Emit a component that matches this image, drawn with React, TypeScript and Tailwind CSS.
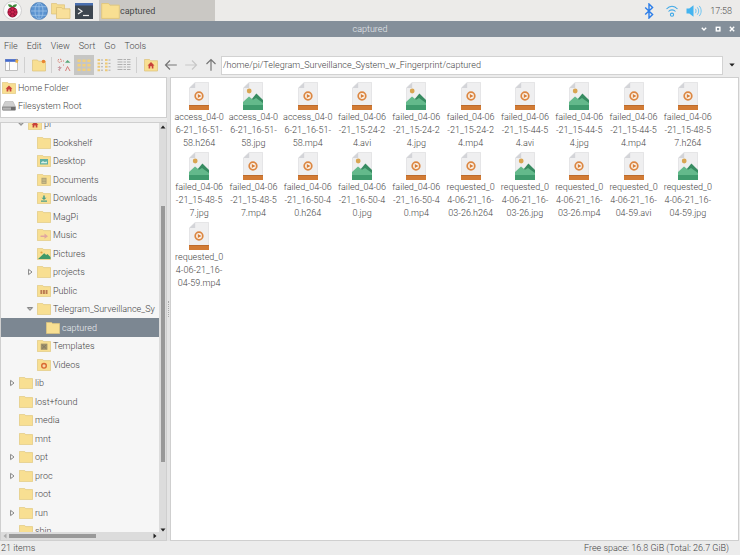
import React, { useState } from 'react';
import { clsx } from 'clsx';

type Emblem = 'home' | 'desktop' | 'documents' | 'downloads' | 'music' | 'pictures' | 'public' | 'templates' | 'videos';

interface TreeNode {
  name: string;
  depth: 0 | 1 | 2 | 3;
  arrow?: 'open' | 'closed';
  emblem?: Emblem;
}

const tree: TreeNode[] = [
  { name: 'pi', depth: 1, arrow: 'open', emblem: 'home' },
  { name: 'Bookshelf', depth: 2 },
  { name: 'Desktop', depth: 2, emblem: 'desktop' },
  { name: 'Documents', depth: 2, emblem: 'documents' },
  { name: 'Downloads', depth: 2, emblem: 'downloads' },
  { name: 'MagPi', depth: 2 },
  { name: 'Music', depth: 2, emblem: 'music' },
  { name: 'Pictures', depth: 2, emblem: 'pictures' },
  { name: 'projects', depth: 2, arrow: 'closed' },
  { name: 'Public', depth: 2, emblem: 'public' },
  { name: 'Telegram_Surveillance_Sy', depth: 2, arrow: 'open' },
  { name: 'captured', depth: 3 },
  { name: 'Templates', depth: 2, emblem: 'templates' },
  { name: 'Videos', depth: 2, emblem: 'videos' },
  { name: 'lib', depth: 0, arrow: 'closed' },
  { name: 'lost+found', depth: 0 },
  { name: 'media', depth: 0 },
  { name: 'mnt', depth: 0 },
  { name: 'opt', depth: 0, arrow: 'closed' },
  { name: 'proc', depth: 0, arrow: 'closed' },
  { name: 'root', depth: 0 },
  { name: 'run', depth: 0, arrow: 'closed' },
  { name: 'sbin', depth: 0 },
];

// Labels wrap mid-word, so the line breaks are kept in the data
const files = [
  'access_04-0\n6-21_16-51-\n58.h264',
  'access_04-0\n6-21_16-51-\n58.jpg',
  'access_04-0\n6-21_16-51-\n58.mp4',
  'failed_04-06\n-21_15-24-2\n4.avi',
  'failed_04-06\n-21_15-24-2\n4.jpg',
  'failed_04-06\n-21_15-24-2\n4.mp4',
  'failed_04-06\n-21_15-44-5\n4.avi',
  'failed_04-06\n-21_15-44-5\n4.jpg',
  'failed_04-06\n-21_15-44-5\n4.mp4',
  'failed_04-06\n-21_15-48-5\n7.h264',
  'failed_04-06\n-21_15-48-5\n7.jpg',
  'failed_04-06\n-21_15-48-5\n7.mp4',
  'failed_04-06\n-21_16-50-4\n0.h264',
  'failed_04-06\n-21_16-50-4\n0.jpg',
  'failed_04-06\n-21_16-50-4\n0.mp4',
  'requested_0\n4-06-21_16-\n03-26.h264',
  'requested_0\n4-06-21_16-\n03-26.jpg',
  'requested_0\n4-06-21_16-\n03-26.mp4',
  'requested_0\n4-06-21_16-\n04-59.avi',
  'requested_0\n4-06-21_16-\n04-59.jpg',
  'requested_0\n4-06-21_16-\n04-59.mp4',
];

const indent = { 0: 'pl-[7px]', 1: 'pl-4', 2: 'pl-[25px]', 3: 'pl-[34px]' };

const EmblemShape = ({ emblem }: { emblem?: Emblem }) => {
  switch (emblem) {
    case 'home':
      return <path d="M7 3.5 3.6 6.8h1V9.6h1.7V7.4h1.4v2.2h1.7V6.8h1z" fill="#c8403a" />;
    case 'desktop':
      return (
        <>
          <rect x="3" y="4" width="8" height="5.5" fill="#5fb0a4" />
          <path d="M4 7.5 6 6l1.5 1L10 6.5v1.7H4z" fill="#d5efe5" />
        </>
      );
    case 'documents':
      return (
        <>
          <rect x="4.5" y="3.8" width="5" height="6" fill="#a79c76" />
          <path d="M5.3 5.2h3.4M5.3 6.8h3.4M5.3 8.4h3.4" stroke="#ead995" strokeWidth=".6" />
        </>
      );
    case 'downloads':
      return <path d="M6.2 3.5h1.6v2.3h1.7L7 8 4.5 5.8h1.7zM4 8.6h6v1.2H4z" fill="#4a9f8a" />;
    case 'music':
      return <path d="M3.5 6.4h4V4.5L11 7.2 7.5 9.8V8h-4z" fill="#dfa6a0" />;
    case 'pictures':
      return (
        <>
          <circle cx="4.5" cy="4.5" r="1.1" fill="#e0a040" />
          <path d="M1 11 7.2 5.2l2 1.8 1.2-1L13.5 9v2z" fill="#3f9a68" />
        </>
      );
    case 'public':
      return <path d="M3.4 5h1.9v4H3.4zM6 5h1.9v4H6zM8.6 5h1.9v4H8.6z" fill="#bb7b52" />;
    case 'templates':
      return (
        <>
          <rect x="3.8" y="3.6" width="6.6" height="6.2" fill="#a0916a" />
          <path d="M5 4.8l4.2 3.8M9.2 4.8 5 8.6" stroke="#7f7660" strokeWidth=".8" />
        </>
      );
    case 'videos':
      return <circle cx="7" cy="6.8" r="2.3" fill="#f6d9a5" stroke="#d96a33" strokeWidth="1.4" />;
    default:
      return null;
  }
};

const Folder = ({ emblem, className = 'h-3 w-3.5' }: { emblem?: Emblem; className?: string }) => (
  <svg viewBox="0 0 14 12" className={clsx('shrink-0', className)} aria-hidden="true">
    <path d="M.4.4h5.2l1 1.2h7v10H.4z" fill="#f8df92" stroke="#e0c67c" strokeWidth=".7" />
    <EmblemShape emblem={emblem} />
  </svg>
);

const Drive = () => (
  <svg viewBox="0 0 14 12" className="h-3 w-3.5 shrink-0" aria-hidden="true">
    <path d="M3 1.5h8L13.6 7H.4z" fill="#cfcfcf" stroke="#a8a8a8" strokeWidth=".5" />
    <rect x=".3" y="6.8" width="13.4" height="3.8" rx=".8" fill="#6d6d6d" />
    <path d="M1 7.4h8v2.4H1z" fill="#b5b5b5" />
  </svg>
);

const FileIcon = ({ image }: { image: boolean }) => (
  <svg viewBox="0 0 20 28" className="h-7 w-5" aria-hidden="true">
    <path d="M6.2.4h13.4v27.2H.4V6z" fill="#efeff0" stroke="#dcdcde" strokeWidth=".7" />
    <path d="M6.2.4V6H.4z" fill="#d3d4d8" />
    {image ? (
      <>
        <circle cx="6.2" cy="9" r="2.4" fill="#d9a552" />
        <path d="M8 18 13.4 11.4 20 18v6H6z" fill="#378b61" />
        <path d="M0 20 6 14.6l4 3.2 3-1.8 7 5V24H0z" fill="#63b98b" />
        <path d="M0 23h20v5H0z" fill="#3f9b6d" />
      </>
    ) : (
      <>
        <circle cx="10" cy="14" r="3.8" fill="#fbf3ea" stroke="#dc8742" strokeWidth="1.7" />
        <path d="M8.8 11.9 12.5 14l-3.7 2.1z" fill="#d67c36" />
        <path d="M0 23h20v5H0z" fill="#d27b34" />
        <path d="M0 23h20v1H0z" fill="#bd6b2b" />
      </>
    )}
  </svg>
);

const Arrow = ({ state }: { state?: 'open' | 'closed' }) => (
  <svg viewBox="0 0 8 8" className="mr-[3px] size-2 shrink-0" aria-hidden="true">
    {state === 'closed' && <path d="M2.6 1.4 6 4 2.6 6.6z" fill="#fff" stroke="#777" strokeWidth=".9" />}
    {state === 'open' && <path d="M1.4 2.6h5.2L4 5.4z" fill="#bbb" stroke="#777" strokeWidth=".9" />}
  </svg>
);

const Taskbar = () => (
  <header className="flex h-[21px] shrink-0 items-center bg-[#ecebe9] pl-[3px] text-[#484848]">
    <button aria-label="Menu" className="mr-2">
      <svg viewBox="0 0 19 19" className="size-[19px]">
        <circle cx="9.5" cy="9.5" r="9" fill="#fafafa" stroke="#c9c9c9" strokeWidth=".8" />
        <path d="M9.2 6.3C6.6 6.6 5 5.4 5.2 3.2c2-.2 3.6.6 4.2 2 .7-1.4 2.3-2.2 4.4-2 .1 2.2-1.5 3.4-4.6 3.1z" fill="#3f8a3c" />
        <path d="M9.5 6c2.8 0 5 2.3 5 5.3 0 2.8-2.4 5.1-5 5.1s-5-2.3-5-5.1C4.5 8.3 6.7 6 9.5 6z" fill="#8f1236" />
        <g fill="#cc2350">
          <circle cx="9.5" cy="7.8" r="1.4" />
          <circle cx="6.6" cy="9.3" r="1.4" />
          <circle cx="12.4" cy="9.3" r="1.4" />
          <circle cx="9.5" cy="11" r="1.5" />
          <circle cx="6.5" cy="12.6" r="1.3" />
          <circle cx="12.5" cy="12.6" r="1.3" />
          <circle cx="9.5" cy="14.5" r="1.3" />
        </g>
      </svg>
    </button>
    <button aria-label="Web Browser" className="mr-[3px]">
      <svg viewBox="0 0 18 18" className="size-[18px]">
        <circle cx="9" cy="9" r="8.5" fill="#5b93d0" stroke="#4577b0" strokeWidth=".7" />
        <g fill="none" stroke="#a3c8ec" strokeWidth=".7">
          <ellipse cx="9" cy="9" rx="4" ry="8.2" />
          <path d="M9 .8v16.4M.8 9h16.4M2.2 4.7h13.6M2.2 13.3h13.6" />
        </g>
      </svg>
    </button>
    <button aria-label="File Manager" className="mr-1">
      <svg viewBox="0 0 20 16" className="h-4 w-5">
        <path d="M.5.5h5l1 1.3h7v9.2H.5z" fill="#f5dc90" stroke="#dcc27a" strokeWidth=".7" />
        <path d="M5.5 4.5h5l1 1.3H19v9.7H5.5z" fill="#f9e09a" stroke="#d8bd74" strokeWidth=".7" />
      </svg>
    </button>
    <button aria-label="Terminal" className="mr-[6px]">
      <svg viewBox="0 0 18 16" className="h-4 w-[18px]">
        <rect width="18" height="16" fill="#3d4650" />
        <rect width="18" height="2.5" fill="#4a70b0" />
        <path d="m3 5.5 4 2.8-4 2.8" fill="none" stroke="#eee" strokeWidth="1.2" />
        <path d="M8 12.5h6" stroke="#eee" strokeWidth="1.2" />
      </svg>
    </button>
    <button className="flex h-full w-[116px] items-center bg-[#cac8c4] pl-0.5 font-normal">
      <Folder className="h-4 w-[19px]" />
      captured
    </button>
    <div className="ml-auto flex items-center pr-2">
      <svg viewBox="0 0 10 16" className="mr-3 h-4 w-2.5" role="img" aria-label="Bluetooth">
        <path d="m1.2 4.5 7.4 7L5 15V1l3.6 3.5-7.4 7" fill="none" stroke="#2b7de9" strokeWidth="1.4" />
      </svg>
      <svg viewBox="0 0 12 12" className="mr-2 h-3 w-3" role="img" aria-label="Wireless network">
        <g fill="none" stroke="#3fa9e8" strokeWidth="1.1">
          <path d="M.5 4c3.2-3.6 7.8-3.6 11 0M2.5 6.5c2-2.2 5-2.2 7 0" />
          <circle cx="6" cy="9.7" r="1.6" />
        </g>
      </svg>
      <svg viewBox="0 0 16 12" className="mr-2 h-3 w-4" role="img" aria-label="Volume">
        <path d="M.5 3.5h2.8L7.5.3v11.4L3.3 8.5H.5z" fill="#43b4f0" />
        <path d="M9.3 3.8c1 1.3 1 3.1 0 4.4M11.3 2.3c1.9 2.2 1.9 5.2 0 7.4M13.2.9c2.6 3 2.6 7.2 0 10.2" fill="none" stroke="#6cc4f2" />
      </svg>
      <time>17:58</time>
    </div>
  </header>
);

const TitleBar = () => (
  <div className="relative flex h-4 shrink-0 items-center justify-center bg-[#848f9a] text-[#e8ebee]">
    <h1>captured</h1>
    <div className="absolute right-1 flex gap-1.5">
      <button aria-label="Minimise" className="p-px">
        <svg viewBox="0 0 6 6" className="size-1.5"><path d="m.8 1.8 2.2 2.2 2.2-2.2" fill="none" stroke="#fff" strokeWidth="1.4" /></svg>
      </button>
      <button aria-label="Maximise" className="p-px">
        <svg viewBox="0 0 6 6" className="size-1.5"><rect x="1.3" y="1.3" width="3.6" height="3.6" fill="none" stroke="#fff" strokeWidth="1.4" /></svg>
      </button>
      <button aria-label="Close" className="p-px">
        <svg viewBox="0 0 6 6" className="size-1.5"><path d="m.8.8 4.4 4.4M5.2.8.8 5.2" stroke="#fff" strokeWidth="1.4" /></svg>
      </button>
    </div>
  </div>
);

const ToolButton = ({ label, active, onClick, children }: { label: string; active?: boolean; onClick?: () => void; children: React.ReactNode }) => (
  <button
    aria-label={label}
    aria-pressed={active}
    onClick={onClick}
    className={clsx('flex h-5 w-5 shrink-0 items-center justify-center', active && 'bg-[#c6c6c4]')}
  >
    <svg viewBox="0 0 14 14" className="size-3.5">{children}</svg>
  </button>
);

const Separator = () => <div className="mx-[2px] h-4 w-px shrink-0 bg-[#d0d0d0]" />;

const Toolbar = () => {
  const [view, setView] = useState('icons');
  const [path, setPath] = useState('/home/pi/Telegram_Surveillance_System_w_Fingerprint/captured');

  return (
    <div className="flex h-[23px] shrink-0 items-center pb-px pl-0.5">
      <ToolButton label="New window">
        <rect x=".5" y="1.5" width="12" height="11" fill="#fdfdfd" stroke="#a9a9a9" strokeWidth=".7" />
        <rect x=".2" y="1.2" width="12.6" height="2.6" fill="#4269cc" />
        <path d="M4.5 4v8.5" stroke="#bbb" />
        <path d="m11.8.5.8 1.7 1.4.3-1.2 1 .2 1.7-1.2-.8-1.3.8.3-1.7-1.1-1 1.5-.3z" fill="#f1b13c" />
      </ToolButton>
      <Separator />
      <div className="w-0.5" />
      <ToolButton label="New folder">
        <path d="M.5 2h5l1 1.2h7V13H.5z" fill="#f8df92" stroke="#dcc27a" strokeWidth=".7" />
        <circle cx="11.5" cy="3.5" r="1.8" fill="#e98432" />
      </ToolButton>
      <Separator />
      <ToolButton label="Thumbnail view" active={view === 'thumbnails'} onClick={() => setView('thumbnails')}>
        <circle cx="2.7" cy="2.7" r="1.7" fill="none" stroke="#d46d5b" strokeDasharray="1.5 1" />
        <path d="M8 4.8 10.5 2l3 2.8z" fill="#58a77a" />
        <path d="M2.6 8v5M.8 9.5h3.6M1 12l3.200-2" stroke="#c89aa2" strokeWidth=".9" />
        <path d="m8.5 13 2-4.5L13 13M6 7h1M6 3h1" fill="none" stroke="#d26f6a" strokeWidth=".9" />
      </ToolButton>
      <ToolButton label="Icon view" active={view === 'icons'} onClick={() => setView('icons')}>
        <path d="M.5 1.5h3.2v2.6H.5zM5.400 1.5h3.2v2.6H5.4zM10.3 1.5h3.2v2.6h-3.2zM.5 6h3.2v2.6H.5zM5.4 6h3.2v2.6H5.4zM10.3 6h3.2v2.6h-3.2zM.5 10.5h3.2v2.6H.5zM5.4 10.5h3.2v2.6H5.4zM10.3 10.5h3.2v2.6h-3.2z" fill="#f2cf7c" />
      </ToolButton>
      <ToolButton label="Compact view" active={view === 'compact'} onClick={() => setView('compact')}>
        <path d="M.5 1h2.6v2H.5zM.5 4.4h2.6v2H.5zM.5 7.8h2.6v2H.5zM.5 11.2h2.6v2H.5zM8 1h2.6v2H8zM8 4.4h2.6v2H8zM8 7.8h2.6v2H8zM8 11.2h2.6v2H8z" fill="#edc976" />
        <path d="M4 2h2M4 5.4h2M4 8.8h2M4 12.2h2M11.5 2h2M11.5 5.4h2M11.5 8.8h2M11.5 12.2h2" stroke="#a7a7a7" strokeWidth=".9" />
      </ToolButton>
      <ToolButton label="Detailed list" active={view === 'list'} onClick={() => setView('list')}>
        <path d="M.5 1.5h13M.5 4h13M.5 6.5h13M.5 9h13M.5 11.5h13" stroke="#b0b0b0" strokeDasharray="5 1 2.5 1 3.5 1" />
      </ToolButton>
      <Separator />
      <div className="w-0.5" />
      <ToolButton label="Home">
        <path d="M.5 1.5h5l1 1.2h7V13H.5z" fill="#f8df92" stroke="#dcc27a" strokeWidth=".7" />
        <path d="M7 4 3.5 7.4h1.1v3.2h1.6V8.3h1.6v2.3h1.6V7.4h1.1z" fill="#c8403a" />
      </ToolButton>
      <ToolButton label="Back">
        <path d="M12.8 7h-11M6 2.5 1.5 7 6 11.500" fill="none" stroke="#777" strokeWidth="1.2" />
      </ToolButton>
      <ToolButton label="Forward">
        <path d="M1.2 7h11M8 2.5 12.5 7 8 11.5" fill="none" stroke="#c8c8c8" strokeWidth="1.2" />
      </ToolButton>
      <ToolButton label="Up">
        <path d="M7 12.8v-11M2.5 6 7 1.5 11.5 6" fill="none" stroke="#777" strokeWidth="1.2" />
      </ToolButton>
      <input
        aria-label="Location"
        value={path}
        onChange={(e) => setPath(e.target.value)}
        className="h-[19px] min-w-0 flex-1 border border-[#d2d2d2] bg-white px-px font-light text-[#444] outline-none"
      />
      <button aria-label="Show history" className="flex h-5 w-[17px] shrink-0 items-center justify-center">
        <svg viewBox="0 0 6 4" className="h-1 w-1.5"><path d="M.3.5h5.4L3 3.5z" fill="#222" /></svg>
      </button>
    </div>
  );
};

const Sidebar = () => {
  const [selected, setSelected] = useState('captured');

  return (
    <aside className="flex w-[167px] shrink-0 flex-col gap-1">
      <nav aria-label="Places" className="border border-[#cfcfcf] bg-white pb-0.5">
        <button className="flex h-[19px] w-full items-center gap-0.5 pl-px">
          <Folder emblem="home" />
          Home Folder
        </button>
        <button className="flex h-[18px] w-full items-center gap-0.5 pl-px">
          <Drive />
          Filesystem Root
        </button>
      </nav>

      <div className="flex min-h-0 flex-1 border border-[#cfcfcf] bg-[#f6f6f6]">
        <div className="flex min-w-0 flex-1 flex-col">
          <ul role="tree" className="-mt-2 min-h-0 flex-1 overflow-hidden [clip-path:inset(8px_0_0_0)]">
            {tree.map((node) => (
              <li key={node.name} role="treeitem" aria-selected={node.name === selected} className="odd:h-[18px] even:h-[19px]">
                <button
                  onClick={() => setSelected(node.name)}
                  className={clsx(
                    'flex h-full w-full items-center overflow-hidden whitespace-nowrap',
                    indent[node.depth],
                    node.name === selected && 'bg-[#7c8792] text-[#eef0f2]'
                  )}
                >
                  <Arrow state={node.arrow} />
                  <Folder emblem={node.emblem} />
                  <span className="ml-0.5">{node.name}</span>
                </button>
              </li>
            ))}
          </ul>
          <div className="flex h-2 shrink-0 items-center bg-[#dcdcdc] px-0.5" aria-hidden="true">
            <svg viewBox="0 0 4 6" className="h-1.5 w-1"><path d="M3.5.5v5L.5 3z" fill="#aaa" /></svg>
            <div className="ml-0.5 h-1 w-[87px] bg-[#999]" />
            <svg viewBox="0 0 4 6" className="ml-auto h-1.5 w-1"><path d="M.5.5v5l3-2.5z" fill="#222" /></svg>
          </div>
        </div>
        <div className="flex w-[7px] shrink-0 flex-col items-center bg-[#dcdcdc] pt-0.5 pb-2" aria-hidden="true">
          <svg viewBox="0 0 6 4" className="h-1 w-1.5"><path d="M.5 3.5h5L3 .5z" fill="#222" /></svg>
          <div className="min-h-0 flex-[77]" />
          <div className="min-h-0 w-1 flex-[257] bg-[#999]" />
          <div className="min-h-0 flex-[66]" />
          <svg viewBox="0 0 6 4" className="h-1 w-1.5"><path d="M.5.5h5L3 3.5z" fill="#222" /></svg>
        </div>
      </div>
    </aside>
  );
};

const FileGrid = () => (
  <main className="mr-px min-w-0 flex-1 border border-[#cfcfcf] bg-white">
    <div className="grid grid-cols-10 gap-y-0.5 pt-1 pr-[23px] pl-px">
      {files.map((label) => (
        <button key={label} className="flex flex-col items-center gap-px">
          <FileIcon image={label.endsWith('.jpg')} />
          <span className="text-center leading-[13px] whitespace-pre">{label}</span>
        </button>
      ))}
    </div>
  </main>
);

export default function App() {
  return (
    <div className="flex h-screen flex-col overflow-hidden bg-[#ececec] font-['Roboto',sans-serif] text-[9px] leading-3 font-light text-[#444]">
      <Taskbar />
      <TitleBar />
      <nav aria-label="Menu bar" className="flex h-[17px] shrink-0 items-center gap-[9px] pl-1">
        {['File', 'Edit', 'View', 'Sort', 'Go', 'Tools'].map((item) => (
          <button key={item}>{item}</button>
        ))}
      </nav>
      <Toolbar />
      <div className="flex min-h-0 flex-1">
        <Sidebar />
        {/* drag handle between the panes */}
        <div className="flex w-[3px] shrink-0 flex-col items-center justify-center bg-[#e4e4e4]">
          <div className="h-4 w-px border-l border-dotted border-[#aaa]" />
        </div>
        <FileGrid />
      </div>
      <footer className="flex h-3.5 shrink-0 items-center justify-between pr-[11px] pl-px">
        <span>21 items</span>
        <span>Free space: 16.8 GiB (Total: 26.7 GiB)</span>
      </footer>
    </div>
  );
}
